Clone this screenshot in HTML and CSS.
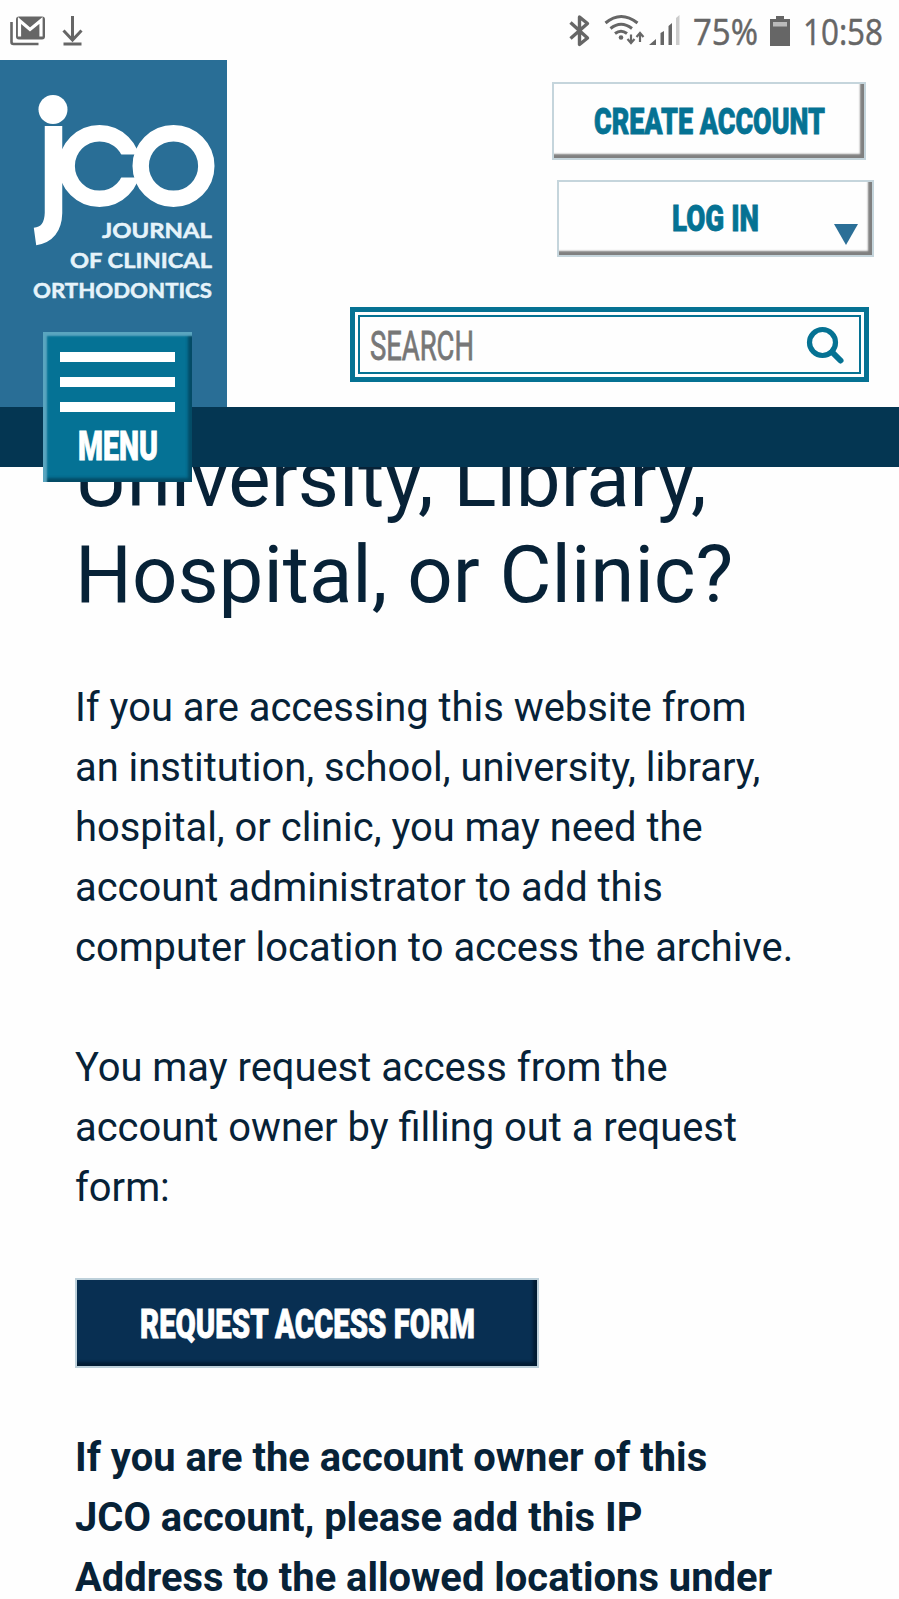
FILE: index.html
```html
<!DOCTYPE html>
<html lang="en">
<head>
    <meta charset="UTF-8">
    <meta name="viewport" content="width=device-width, initial-scale=1.0">
    <title>JCO - Journal of Clinical Orthodontics</title>
    <link rel="stylesheet" href="styles.css">
</head>
<body>

    <!-- Status bar -->
    <div class="status-bar">
        <svg class="status-icons" width="899" height="60" viewBox="0 0 899 60">
            <!-- mail -->
            <path d="M11.5 22v20q0 2 2 2h25" fill="none" stroke="#666" stroke-width="2.6"/>
            <rect x="16" y="16.500" width="29" height="23" rx="3" fill="#666"/>
            <path d="M19.500 36.500V20.500L30 29.500L41 20.500V36.500" fill="none" stroke="#fff" stroke-width="3.2"/>
            <!-- download -->
            <path d="M72.500 16v24M63.500 30.500l9 9.500l9-9.500M63.500 44h18" fill="none" stroke="#666" stroke-width="3"/>
            <!-- bluetooth -->
            <path d="M570.500 22.500l17 15.500l-8 6.500V17l8 6.500l-17 15" fill="none" stroke="#666" stroke-width="3.400" stroke-linejoin="round"/>
            <!-- wifi -->
            <g fill="none" stroke="#666" stroke-width="3">
                <path d="M605.500 23q15.500-13 32 0"/>
                <path d="M610.500 28.500q10.500-8.500 21.500 0"/>
                <path d="M615 33.500q6-4.500 12 0"/>
                <path d="M631 34.500v8M627.500 39l3.500 4l3.500-4M640 42v-8.500M636.500 37l3.500-4l3.500 4" stroke-width="2.200"/>
            </g>
            <circle cx="621" cy="37.500" r="2.300" fill="#666"/>
            <!-- signal -->
            <path d="M649 45l7-6v6zM660.500 45V33l3.500-2v14zM668.500 45V26l3.500-3v22z" fill="#666"/>
            <path d="M676 45V18l3.500-3v30z" fill="#ccc"/>
            <!-- battery -->
            <path d="M770 19h6v-3h8v3h6v27h-20z" fill="#666"/>
            <rect x="773" y="22" width="14" height="4.500" fill="#bbb"/>
        </svg>
        <svg class="label battery" width="65" height="46"><text x="0" y="33" textLength="65" lengthAdjust="spacingAndGlyphs">75%</text></svg>
        <svg class="label clock" width="80" height="46"><text x="0" y="33" textLength="80" lengthAdjust="spacingAndGlyphs">10:58</text></svg>
    </div>

    <!-- Header -->
    <header class="header">
        <a class="logo" href="#">
            <svg width="227" height="347" viewBox="0 60 227 347" fill="none" stroke="#fff">
                <circle cx="53" cy="109.500" r="14.500" fill="#fff" stroke="none"/>
                <path d="M53.500 126V213Q53 234 35 236.500" stroke-width="17.500"/>
                <circle cx="99.500" cy="166" r="32.800" stroke-width="16.400"/>
                <rect x="118" y="154.500" width="25" height="23" fill="#296e96" stroke="none"/>
                <circle cx="173.500" cy="166" r="32.800" stroke-width="16.400"/>
                <g class="logo-text">
                    <text x="102" y="237.500" textLength="110" lengthAdjust="spacingAndGlyphs">JOURNAL</text>
                    <text x="70" y="267.500" textLength="142" lengthAdjust="spacingAndGlyphs">OF CLINICAL</text>
                    <text x="33" y="297.500" textLength="179" lengthAdjust="spacingAndGlyphs">ORTHODONTICS</text>
                </g>
            </svg>
        </a>
        <div class="tools">
            <button class="button-account">
                <svg class="label" width="232" height="46"><text x="-1" y="32.500" textLength="231" lengthAdjust="spacingAndGlyphs">CREATE ACCOUNT</text></svg>
            </button>
            <button class="button-login">
                <svg class="label" width="86" height="46"><text x="-1" y="32" textLength="87" lengthAdjust="spacingAndGlyphs">LOG IN</text></svg>
                <span class="arrow"></span>
            </button>
            <div class="search">
                <div class="search-inner">
                    <svg class="label" width="102" height="48"><text x="-1" y="35" textLength="104" lengthAdjust="spacingAndGlyphs">SEARCH</text></svg>
                    <svg width="40" height="42" viewBox="0 0 40 42" fill="none" stroke="#057293">
                        <circle cx="17.500" cy="17.500" r="13" stroke-width="5.200"/>
                        <path d="M27 27L35.500 35.500" stroke-width="6" stroke-linecap="round"/>
                    </svg>
                </div>
            </div>
        </div>
    </header>
    <nav class="nav-bar">
        <button class="button-menu">
            <span class="line"></span>
            <span class="line"></span>
            <span class="line"></span>
            <svg class="label" width="80" height="48"><text x="-1" y="35" textLength="80" lengthAdjust="spacingAndGlyphs">MENU</text></svg>
        </button>
    </nav>

    <!-- Content -->
    <main class="content">
        <h1>University, Library,<br>Hospital, or Clinic?</h1>
        <p class="intro">If you are accessing this website from<br>an institution, school, university, library,<br>hospital, or clinic, you may need the<br>account administrator to add this<br>computer location to access the archive.</p>
        <p>You may request access from the<br>account owner by filling out a request<br>form:</p>
        <button class="button-request">
            <svg class="label" width="335" height="48"><text x="0" y="35.500" textLength="335" lengthAdjust="spacingAndGlyphs">REQUEST ACCESS FORM</text></svg>
        </button>
        <p class="owner">If you are the account owner of this<br>JCO account, please add this IP<br>Address to the allowed locations under</p>
    </main>

</body>
</html>
```
FILE: styles.css
```css
* {
    box-sizing: border-box;
    margin: 0;
    padding: 0;
}

body {
    height: 1599px;
    overflow: hidden;
    background-color: #fefefe;
    color: #072237;
    font-family: Roboto, sans-serif;
}

button {
    display: flex;
    border: none;
    border-radius: 0;
}

svg {
    display: block;
    flex-shrink: 0;
}

.label {
    overflow: visible;
    font-family: Roboto, sans-serif;
    font-size: 37.5px;
    font-weight: 900;
    fill: #057293;
    stroke: #057293;
    stroke-width: 0.8px;
}

/* Status bar */
.status-bar {
    display: flex;
    height: 60px;
    padding: 12px 0 0 693px;
}

.status-icons {
    position: absolute;
    top: 0;
    left: 0;
}

.battery, .clock {
    font-family: "Open Sans", sans-serif;
    font-size: 37px;
    font-weight: 400;
    fill: #666;
    stroke: #666;
    stroke-width: 0.5px;
}

.clock {
    margin-left: 45px;
}

/* Header */
.header {
    display: flex;
    justify-content: space-between;
    height: 347px;
}

.logo {
    width: 227px;
    background-color: #296e96;
}

.logo-text {
    font-family: Lato, sans-serif;
    font-size: 21px;
    font-weight: 700;
    fill: #e6f3fa;
    stroke: #e6f3fa;
    stroke-width: 0.5px;
}

.tools {
    display: flex;
    flex-direction: column;
    align-items: flex-end;
    padding: 22px 25px 0 0;
}

.button-account, .button-login {
    border: 2px solid #c5d5dc;
    background-color: #fefefe;
    box-shadow: inset -4px -4px 2px #808080;
}

.button-account {
    width: 314px;
    height: 78px;
    margin-right: 8px;
    padding: 17px 0 0 41px;
}

.button-login {
    width: 317px;
    height: 77px;
    margin-top: 20px;
    padding: 17px 0 0 114px;
}

.arrow {
    margin: 25px 0 0 75px;
    border-top: 21px solid #2b6f97;
    border-left: 12px solid transparent;
    border-right: 12px solid transparent;
}

.search {
    width: 519px;
    height: 75px;
    margin: 50px 5px 0 0;
    padding: 3px;
    border: 5px solid #057293;
}

.search-inner {
    display: flex;
    justify-content: space-between;
    height: 59px;
    padding: 8px 14px 0 11px;
    border: 2px solid #057293;
}

.search .label {
    font-size: 41px;
    font-weight: 400;
    fill: #777;
    stroke: #777;
}

/* Navigation */
.nav-bar {
    position: relative;
    height: 60px;
    padding-left: 43px;
    background-color: #043652;
}

.button-menu {
    flex-direction: column;
    width: 149px;
    height: 150px;
    margin-top: -75px;
    position: absolute;
    padding: 20px 17px 0;
    background-color: #057295;
    box-shadow: inset 4px 4px 2px #5aa5bf, inset -4px -4px 3px #044b66;
}

.line {
    width: 115px;
    height: 10px;
    margin-bottom: 15px;
    background-color: #fff;
}

.button-menu .label {
    margin: -2px 0 0 19px;
    font-size: 40px;
    fill: #fff;
    stroke: #fff;
}

/* Content */
.content {
    padding: 0 75px;
}

h1 {
    margin-top: -36px;
    font-size: 79.8px;
    font-weight: 400;
    line-height: 96px;
    white-space: nowrap;
}

p {
    margin-top: 60px;
    font-size: 39.9px;
    line-height: 60px;
    white-space: nowrap;
}

.intro {
    margin-top: 55px;
}

.button-request {
    width: 464px;
    height: 90px;
    margin-top: 60px;
    padding: 22px 0 0 63px;
    border: 2px solid #bdd0da;
    background-color: #082f52;
    box-shadow: inset -4px -4px 3px #031c33;
}

.button-request .label {
    font-size: 40px;
    fill: #fff;
    stroke: #fff;
}

.owner {
    font-weight: 700;
}
```
